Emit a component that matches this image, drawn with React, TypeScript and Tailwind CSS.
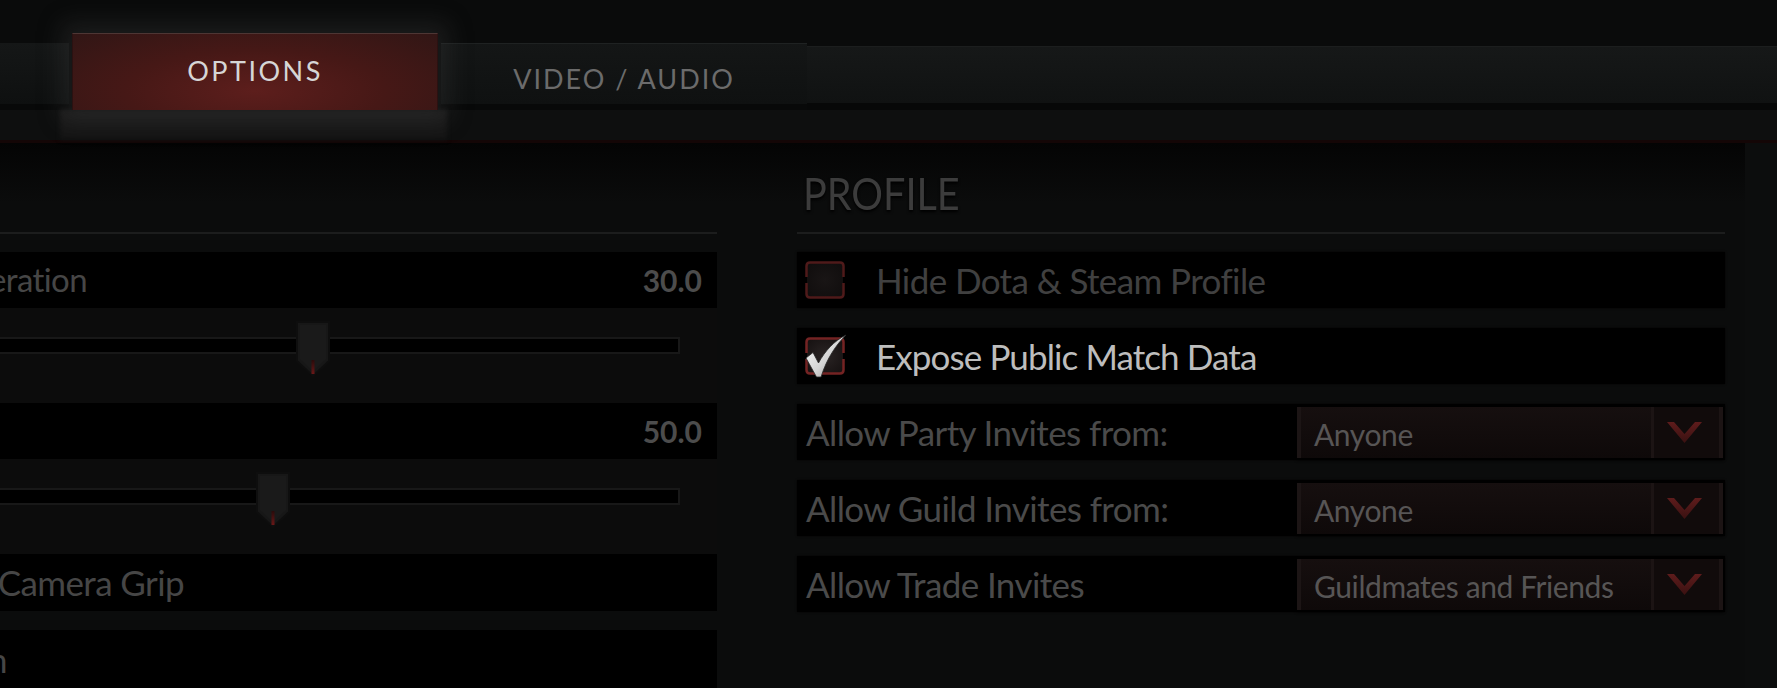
import React from "react";

function CheckBox({ checked, dim }: { checked: boolean; dim?: boolean }) {
  const stroke = dim ? "#4f1a1a" : "#742323";
  return (
    <svg width="40" height="38" viewBox="0 0 40 38" className="overflow-visible shrink-0">
      <defs>
        <radialGradient id={checked ? "cbf1" : "cbf0"} cx="50%" cy="50%" r="60%">
          <stop offset="0%" stopColor={dim ? "#191515" : "#2a2424"} />
          <stop offset="100%" stopColor={dim ? "#110e0e" : "#181313"} />
        </radialGradient>
        <linearGradient id="tick" x1="0" y1="0" x2="1" y2="1">
          <stop offset="0%" stopColor="#ffffff" />
          <stop offset="55%" stopColor="#d4d4d4" />
          <stop offset="100%" stopColor="#8a8a8a" />
        </linearGradient>
      </defs>
      <rect x="2" y="2" width="36" height="34" rx="3" fill={`url(#${checked ? "cbf1" : "cbf0"})`} />
      <path d="M1.5 16 V5 Q1.5 1.5 5 1.5 H35 Q38.5 1.5 38.5 5 V16" fill="none" stroke={stroke} strokeWidth="2.5" />
      <path d="M1.5 22 V33 Q1.5 36.5 5 36.5 H35 Q38.5 36.5 38.5 33 V22" fill="none" stroke={stroke} strokeWidth="2.5" />
      {checked && (
        <path
          d="M1 21 L8 15.5 L13.5 26 C20 14 29 4 41 -2 C31 8 22 21 16 40 L11.5 40 Z"
          fill="url(#tick)"
          stroke="#2a2a2a"
          strokeWidth="0.8"
        />
      )}
    </svg>
  );
}

function Chevron() {
  return (
    <svg width="35" height="24" viewBox="0 0 35 24">
      <defs>
        <linearGradient id="chev" x1="0" y1="0" x2="0" y2="1">
          <stop offset="0%" stopColor="#5e1c1c" />
          <stop offset="100%" stopColor="#3a1111" />
        </linearGradient>
      </defs>
      <path d="M0 2 L7 2 L17.5 14 L28 2 L35 2 L17.5 23 Z" fill="url(#chev)" />
    </svg>
  );
}

function Dropdown({ value }: { value: string }) {
  return (
    <div className="ml-auto mr-[2px] w-[426px] h-[51px] flex bg-gradient-to-b from-[#160f0f] via-[#120c0c] to-[#0e0909] shadow-[0_2px_3px_rgba(0,0,0,0.9)]">
      <div className="flex-1 flex items-center pl-[13px] pt-[4px] border-l-[4px] border-[#1c1515] text-[30px] leading-none tracking-[-0.4px] text-[#575555] whitespace-nowrap">
        {value}
      </div>
      <div className="w-[72px] flex items-center justify-center border-l-[3px] border-r-[4px] border-[#1c1414] bg-[#110b0b] pr-[4px]">
        <Chevron />
      </div>
    </div>
  );
}

function Thumb() {
  return (
    <svg width="34" height="56" viewBox="0 0 34 56">
      <defs>
        <linearGradient id="red" x1="0" y1="0" x2="0" y2="1">
          <stop offset="0%" stopColor="#2a0b0b" />
          <stop offset="100%" stopColor="#6a1818" />
        </linearGradient>
      </defs>
      <polygon points="1,1 33,1 33,40 17,55 1,40" fill="#171717" stroke="#0e0e0e" strokeWidth="2" />
      <polygon points="4,4 30,4 30,38 17,50 4,38" fill="#1a1a1a" />
      <rect x="15.5" y="39" width="3" height="14" fill="url(#red)" />
    </svg>
  );
}

function Slider({ thumbX }: { thumbX: number }) {
  return (
    <div className="h-[95px] bg-[#0c0c0c] relative">
      <div className="mt-[29px] w-[680px] h-[17px] bg-black border-y-2 border-r-2 border-[#181818]" />
      <div className="absolute top-[13px]" style={{ left: thumbX }}>
        <Thumb />
      </div>
    </div>
  );
}

function LeftRow({
  label,
  labelEnd,
  value,
  h = 56,
  small,
}: {
  label?: string;
  labelEnd: number;
  value?: string;
  h?: number;
  small?: boolean;
}) {
  return (
    <div className="bg-black flex items-center" style={{ height: h }}>
      <div className="shrink-0 flex justify-end whitespace-nowrap" style={{ width: labelEnd }}>
        {label && (
          <span
            className={
              small
                ? "shrink-0 text-[33px] leading-none tracking-[-0.6px] text-[#464646]"
                : "shrink-0 text-[35px] leading-none tracking-[-0.6px] text-[#464646]"
            }
          >
            {label}
          </span>
        )}
      </div>
      <div className="flex-1" />
      {value && <span className="pr-[15px] text-[30px] leading-none font-bold text-[#4c4c4c]">{value}</span>}
    </div>
  );
}

function RightRow({ children }: { children: React.ReactNode }) {
  return <div className="h-[56px] bg-black flex items-center shadow-[0_0_2px_rgba(0,0,0,0.8)]">{children}</div>;
}

export default function App() {
  return (
    <div className="w-[1777px] h-[688px] overflow-hidden bg-[#0b0c0c] font-['Lato','Noto_Sans',sans-serif]">
      {/* header */}
      <div className="h-[143px] bg-[#0a0b0b] flex flex-col">
        <div className="h-[110px] flex items-end">
          <div className="w-[69px] h-[67px] bg-gradient-to-b from-[#151717] to-[#0e1010] border-b-[6px] border-[#080909]" />
          <div className="ml-[3px] w-[366px] h-[77px] relative z-10 flex items-center justify-center border-t border-[#4e3634] border-x border-x-[#2b1111] bg-[radial-gradient(ellipse_at_50%_75%,#5d1e1c_0%,#461816_50%,#311615_100%)] shadow-[0_0_22px_10px_rgba(60,60,60,0.35)]">
            <span className="text-[27px] leading-none tracking-[2.5px] text-[#d6d6d6] pb-[4px]">OPTIONS</span>
          </div>
          <div className="ml-[3px] w-[366px] h-[67px] flex items-center justify-center border-t border-[#1f2222] bg-gradient-to-b from-[#141616] to-[#0f1111] border-b-[6px] border-b-[#080909]">
            <span className="text-[27px] leading-none tracking-[2px] text-[#6b6b6b] pt-[8px]">VIDEO / AUDIO</span>
          </div>
          <div className="flex-1 h-[64px] bg-gradient-to-b from-[#161818] to-[#101212] border-t border-[#1c1e1e] border-b-[7px] border-b-[#070808]" />
        </div>
        <div className="h-[30px] flex bg-[#0e0f0f]">
          <div className="ml-[60px] w-[387px] h-full bg-gradient-to-b from-[#1c1c1c] to-[#141414] blur-[2px]" />
        </div>
        <div className="h-[3px] bg-[#140606]" />
      </div>

      {/* body */}
      <div className="h-[545px] flex bg-[linear-gradient(to_bottom,#040404_0px,#0b0c0c_60px)]">
        {/* left panel */}
        <div className="w-[717px] shrink-0 overflow-hidden flex flex-col">
          <div className="h-[89px] shrink-0" />
          <div className="h-[2px] shrink-0 bg-[#1c1d1d]" />
          <div className="h-[18px] shrink-0" />
          <LeftRow label="Camera Acceleration" labelEnd={87} value="30.0" small />
          <Slider thumbX={296} />
          <LeftRow labelEnd={0} value="50.0" h={57} />
          <Slider thumbX={256} />
          <LeftRow label="Camera Grip" labelEnd={184} h={57} />
          <div className="h-[19px] shrink-0" />
          <LeftRow label="Camera Pan" labelEnd={7} h={58} />
        </div>

        {/* gutter */}
        <div className="w-[80px] shrink-0" />

        {/* right panel */}
        <div className="w-[928px] shrink-0 flex flex-col">
          <div className="h-[89px] shrink-0 pt-[28px] pl-[6px]">
            <span className="inline-block origin-left scale-x-[0.9] text-[44px] leading-none text-[#3c3c3c] [text-shadow:0_2px_3px_#000]">
              PROFILE
            </span>
          </div>
          <div className="h-[2px] shrink-0 bg-[#1c1d1d]" />
          <div className="h-[18px] shrink-0" />
          <div className="flex flex-col gap-[20px]">
            <RightRow>
              <div className="ml-[8px]">
                <CheckBox checked={false} dim />
              </div>
              <span className="ml-[31px] text-[35px] leading-none tracking-[-0.6px] text-[#404040] whitespace-nowrap">Hide Dota &amp; Steam Profile</span>
            </RightRow>
            <RightRow>
              <div className="ml-[8px]">
                <CheckBox checked />
              </div>
              <span className="ml-[31px] text-[35px] leading-none tracking-[-0.9px] text-[#bdbdbd] whitespace-nowrap">Expose Public Match Data</span>
            </RightRow>
            <RightRow>
              <span className="ml-[9px] text-[35px] leading-none tracking-[-0.6px] text-[#4a4a4a] whitespace-nowrap">Allow Party Invites from:</span>
              <Dropdown value="Anyone" />
            </RightRow>
            <RightRow>
              <span className="ml-[9px] text-[35px] leading-none tracking-[-0.6px] text-[#4a4a4a] whitespace-nowrap">Allow Guild Invites from:</span>
              <Dropdown value="Anyone" />
            </RightRow>
            <RightRow>
              <span className="ml-[9px] text-[35px] leading-none tracking-[-0.6px] text-[#4a4a4a] whitespace-nowrap">Allow Trade Invites</span>
              <Dropdown value="Guildmates and Friends" />
            </RightRow>
          </div>
        </div>

        <div className="w-[20px] shrink-0" />
        <div className="flex-1 bg-[#0c0d0d]" />
      </div>
    </div>
  );
}
